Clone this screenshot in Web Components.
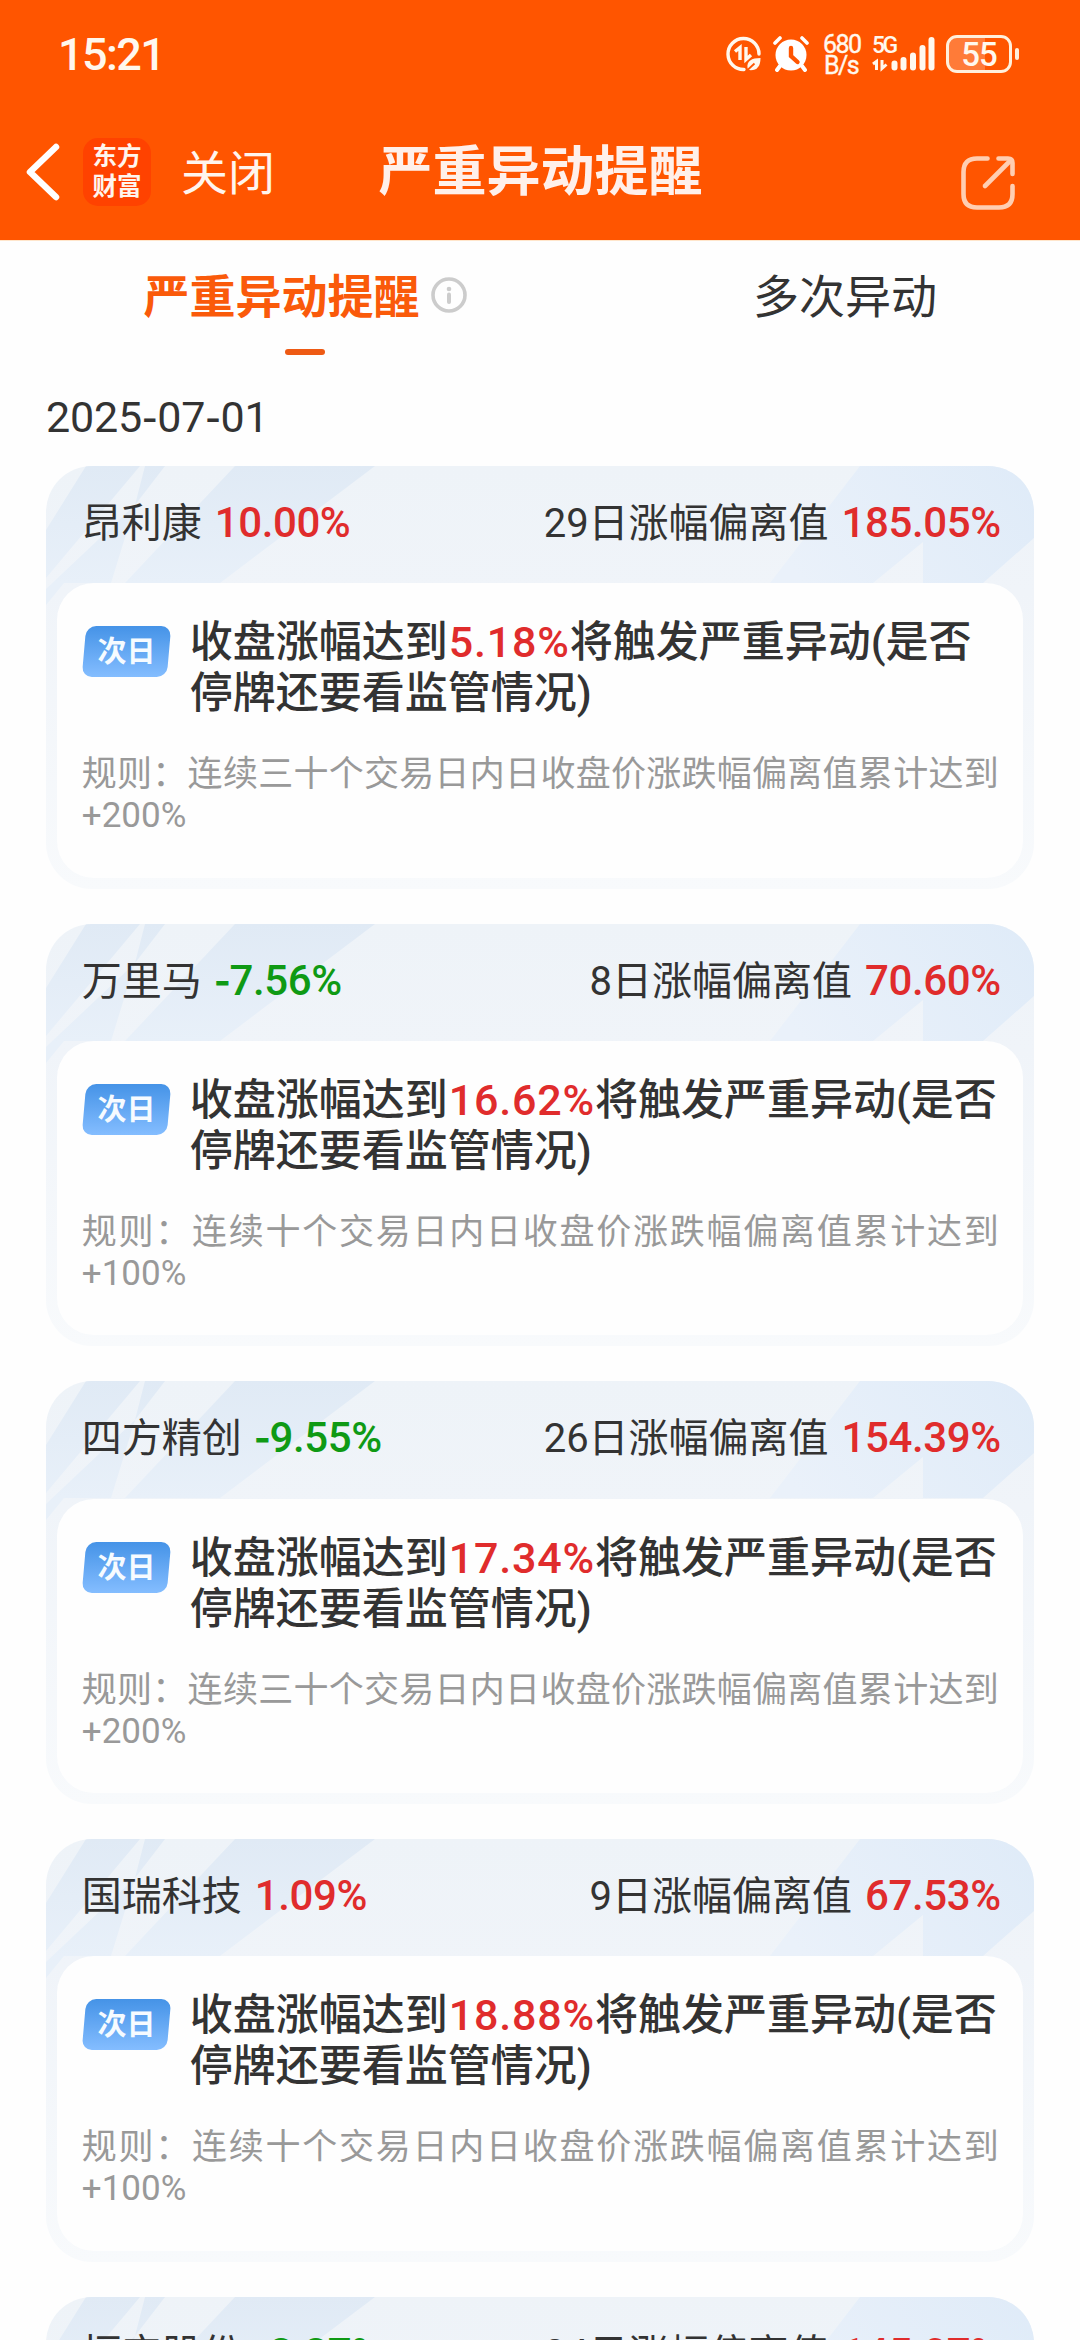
<!DOCTYPE html>
<html lang="zh-CN">
<head>
<meta charset="UTF-8">
<meta name="viewport" content="width=device-width, initial-scale=1.0">
<title>严重异动提醒</title>
<style>
  html, body {
    margin: 0;
    background: #fefefe;
  }
  body {
    height: 2340px;
    overflow: hidden;
    color: #333;
    font-family: Roboto, "Noto Sans CJK SC", sans-serif;
  }
  main {
    padding: 0 46px;
  }
</style>
</head>
<body>
  <status-bar time="15:21"></status-bar>
  <nav-bar>严重异动提醒</nav-bar>
  <tab-bar>
    <tab-item active>严重异动提醒</tab-item>
    <tab-item>多次异动</tab-item>
  </tab-bar>
  <main>
    <date-label value="2025-07-01"></date-label>
    <stock-list></stock-list>
  </main>

<script>
// Roboto's hyphen is too short next to its digits
const wideHyphen = text => text.replace(/-/g, '<span class="hyphen">-</span>');

class StatusBar extends HTMLElement {
  connectedCallback() {
    this.attachShadow({ mode: 'open' });
    this.shadowRoot.innerHTML = `
      <style>
        :host {
          display: flex;
          align-items: center;
          justify-content: space-between;
          box-sizing: border-box;
          height: 108px;
          padding: 0 61px 0 58px;
          background: #ff5500;
          color: #fff8ee;
        }
        .time {
          font-size: 45px;
          font-weight: 500;
          letter-spacing: -1.6px;
        }
        .icons {
          display: flex;
          align-items: center;
        }
        svg { display: block; }
        .speed {
          width: 36px;
          margin: 1px 13px 0 14px;
          font-size: 25px;
          line-height: 21px;
          letter-spacing: -1.6px;
          text-align: center;
          white-space: nowrap;
          -webkit-text-stroke: 0.4px;
        }
        .signal {
          display: grid;
          width: 63px;
          height: 36px;
          margin-right: 11px;
        }
        .signal > * { grid-area: 1 / 1; }
        .signal span {
          font-size: 23px;
          font-weight: 500;
          line-height: 20px;
          letter-spacing: -2.6px;
        }
        .battery {
          display: flex;
          align-items: center;
          gap: 3px;
        }
        .cell {
          box-sizing: border-box;
          width: 66px;
          height: 38px;
          border: 3px solid #fff0dc;
          border-radius: 11px;
          background: linear-gradient(to right, #ff7b38 60%, transparent 60%);
          font-size: 33px;
          font-weight: 500;
          line-height: 33px;
          letter-spacing: -1px;
          text-align: center;
        }
        .nub {
          width: 4px;
          height: 12px;
          border-radius: 2px;
          background: #fff0dc;
        }
      </style>
      <span class="time">${this.getAttribute('time')}</span>
      <div class="icons">
        <svg width="36" height="36" viewBox="0 0 36 36" fill="none" stroke="#fff8ee">
          <path d="M33 18A15.5 15.5 0 1 0 18 33.5" stroke-width="3.4" stroke-linecap="round"/>
          <path d="M9 15.5l5-4V24" stroke-width="3.4"/>
          <path d="M20 11v12.500l5-4.500" stroke-width="3.4"/>
          <path d="M34.500 22c-9 0-14 3-13 10l1 2c8 1 12-3 12-12z" fill="#fff8ee" stroke="none"/>
          <path d="M20 35.500l8.500-8" stroke="#ff5500" stroke-width="1.800"/>
        </svg>
        <svg style="margin-left:11px" width="36" height="36" viewBox="0 0 36 36" fill="none" stroke="#fff" stroke-linecap="round">
          <circle cx="18" cy="19" r="15.5" fill="#fff" stroke="none"/>
          <path d="M2 7l5-5M34 7l-5-5" stroke-width="3.6"/>
          <path d="M7 30l-3 4M29 30l3 4" stroke-width="4"/>
          <path d="M18 12v8l6.500 6" stroke="#ff5500" stroke-width="4.4"/>
        </svg>
        <div class="speed">680<br>B/s</div>
        <div class="signal">
          <span>5G</span>
          <svg width="63" height="36" viewBox="0 0 63 36" fill="#fff8ee">
            <rect x="19.500" y="24.500" width="6" height="10" rx="3"/>
            <rect x="28.500" y="21" width="6" height="13.500" rx="3"/>
            <rect x="38" y="16.500" width="6" height="18" rx="3"/>
            <rect x="47.500" y="9" width="6" height="25.500" rx="3"/>
            <rect x="56.500" y="1" width="6" height="33.500" rx="3"/>
            <path d="M1 28l3.500-2.500V34M10 24v8.500l4.500-4" fill="none" stroke="#fff8ee" stroke-width="3"/>
          </svg>
        </div>
        <div class="battery">
          <div class="cell">55</div>
          <div class="nub"></div>
        </div>
      </div>
    `;
  }
}
customElements.define('status-bar', StatusBar);

class NavBar extends HTMLElement {
  connectedCallback() {
    this.attachShadow({ mode: 'open' });
    this.shadowRoot.innerHTML = `
      <style>
        :host {
          display: grid;
          grid-template-columns: 1fr auto 1fr;
          align-items: center;
          box-sizing: border-box;
          height: 133px;
          padding: 0 63px 4px 26px;
          border-bottom: 1px solid #ffe6cc;
          background: #ff5500;
          color: #fff5ee;
        }
        .left {
          display: flex;
          align-items: center;
        }
        .logo {
          display: grid;
          place-content: center;
          width: 68px;
          height: 68px;
          margin: 0 30px 0 23px;
          border-radius: 15px;
          background: #ff4200;
          font-size: 24.5px;
          font-weight: 700;
          line-height: 30px;
        }
        .close {
          margin-top: 3px;
          font-size: 47px;
          line-height: 60px;
        }
        h1 {
          margin: 1px -38px 0 0;
          font-size: 54px;
          font-weight: 700;
          line-height: 60px;
          color: #fff0ea;
        }
        .share {
          justify-self: end;
          margin-top: 21px;
        }
        svg { display: block; }
      </style>
      <div class="left">
        <svg width="34" height="58" viewBox="0 0 34 58">
          <path d="M30 4L4 29L30 54" fill="none" stroke="#fff" stroke-width="6.500" stroke-linecap="round" stroke-linejoin="round"/>
        </svg>
        <div class="logo"><span>东方</span><span>财富</span></div>
        <span class="close">关闭</span>
      </div>
      <h1><slot></slot></h1>
      <svg class="share" width="58" height="58" viewBox="0 0 58 58" fill="none" stroke="#ffceb2" stroke-width="4.600" stroke-linecap="round" stroke-linejoin="round">
        <path d="M28.500 4.500H18Q4.500 4.500 4.500 18V40Q4.500 53.500 18 53.500H40Q53.500 53.500 53.500 40V32"/>
        <path d="M39.500 4.500H49Q53.500 4.500 53.500 9V20"/>
        <path d="M52 6L26 32"/>
      </svg>
    `;
  }
}
customElements.define('nav-bar', NavBar);

class TabBar extends HTMLElement {
  connectedCallback() {
    this.attachShadow({ mode: 'open' });
    this.shadowRoot.innerHTML = `
      <style>
        :host {
          display: grid;
          grid-template-columns: 610px 470px;
          height: 134px;
        }
      </style>
      <slot></slot>
    `;
  }
}
customElements.define('tab-bar', TabBar);

class TabItem extends HTMLElement {
  connectedCallback() {
    const active = this.hasAttribute('active');
    this.attachShadow({ mode: 'open' });
    this.shadowRoot.innerHTML = `
      <style>
        :host {
          display: flex;
          flex-direction: column;
          align-items: center;
          padding-top: 26px;
          font-size: 46px;
          line-height: 60px;
        }
        :host([active]) {
          color: #fa5a0a;
          font-weight: 700;
        }
        .label {
          display: flex;
          align-items: center;
          gap: 11px;
        }
        svg { margin-top: -4px; }
        .line {
          width: 40px;
          height: 6px;
          margin-top: 22px;
          border-radius: 3px;
          background: #ee5a14;
        }
      </style>
      <div class="label">
        <slot></slot>
        ${active ? `
        <svg width="36" height="36" viewBox="0 0 36 36">
          <circle cx="18" cy="18" r="16" fill="none" stroke="#ccc" stroke-width="3.600"/>
          <circle cx="18" cy="12" r="2.300" fill="#ccc"/>
          <path d="M18 17.500v7.500" stroke="#ccc" stroke-width="4" stroke-linecap="round"/>
        </svg>` : ''}
      </div>
      ${active ? '<div class="line"></div>' : ''}
    `;
  }
}
customElements.define('tab-item', TabItem);

class DateLabel extends HTMLElement {
  connectedCallback() {
    this.attachShadow({ mode: 'open' });
    this.shadowRoot.innerHTML = `
      <style>
        :host {
          display: block;
          height: 91px;
          font-size: 43px;
          line-height: 84px;
          letter-spacing: -0.2px;
        }
        .hyphen {
          font-family: "DejaVu Sans", sans-serif;
          font-weight: 400;
          line-height: 1;
        }
      </style>
      ${wideHyphen(this.getAttribute('value'))}
    `;
  }
}
customElements.define('date-label', DateLabel);

class StockCard extends HTMLElement {
  connectedCallback() {
    const { name, change, days, total, target, rule, limit } = this.data;
    const trend = change.startsWith('-') ? 'down' : 'up';
    this.attachShadow({ mode: 'open' });
    this.shadowRoot.innerHTML = `
      <style>
        :host {
          display: grid;
          height: 422.7px;
          border-radius: 46px;
          overflow: hidden;
          background: linear-gradient(#eef3f8, #f0f4f9 30%, #f8fafc);
        }
        .pattern, .content { grid-area: 1 / 1; }
        .pattern { display: block; }
        .content {
          display: flex;
          flex-direction: column;
          box-sizing: border-box;
          min-width: 0;
          padding: 0 11.3px 11.3px;
        }
        header {
          display: flex;
          justify-content: space-between;
          height: 117.3px;
          padding: 0 22px 0 24.5px;
          font-size: 40px;
          line-height: 114px;
          white-space: pre;
        }
        b {
          font-size: 42px;
          font-weight: 500;
        }
        header b {
          margin-left: 3px;
          letter-spacing: -0.4px;
        }
        .hyphen {
          font-family: "DejaVu Sans", sans-serif;
          font-weight: 400;
          line-height: 1;
          -webkit-text-stroke: 1px;
        }
        .up { color: #e02c2c; }
        .down { color: #0f9a14; }
        .body {
          flex: 1;
          padding: 34px 24px 0 24.5px;
          border-radius: 37px;
          background: #fefefe;
        }
        .notice {
          display: flex;
          gap: 20px;
        }
        .badge {
          flex: none;
          width: 85px;
          height: 51px;
          margin: 9px 2px 0;
          border-radius: 10px;
          background: linear-gradient(#4593e7, #84bdff);
          color: #f6fbff;
          font-size: 29px;
          font-weight: 700;
          line-height: 53px;
          text-align: center;
          transform: skewX(-5deg);
        }
        .badge span {
          display: block;
          transform: skewX(5deg);
        }
        p { margin: 0; }
        .text {
          flex: 1;
          margin: 0 -9px 0 -1px;
          font-size: 43px;
          font-weight: 500;
          line-height: 51px;
        }
        .text b {
          margin-left: 1px;
          font-size: 43px;
          letter-spacing: 0.8px;
        }
        .rule {
          margin-top: 35px;
          color: #999;
          font-size: 35px;
          line-height: 41px;
          text-align: justify;
        }
      </style>
      <svg class="pattern" width="988" height="423" viewBox="0 0 988 423">
        <defs>
          <linearGradient id="l" x1="0" y1="0" x2="0" y2="117" gradientUnits="userSpaceOnUse">
            <stop offset="0" stop-color="#e0eaf5"/>
            <stop offset="1" stop-color="#e8f0f9"/>
          </linearGradient>
          <linearGradient id="r" x1="988" y1="0" x2="780" y2="150" gradientUnits="userSpaceOnUse">
            <stop offset="0" stop-color="#dfebf8"/>
            <stop offset="1" stop-color="#eaf1fa"/>
          </linearGradient>
        </defs>
        <g fill="url(#l)">
          <path d="M40 0H94L0 112V64Z"/>
          <path d="M99 0H119L89 39Z"/>
          <path d="M89 39L65 117H18L0 139V123Z"/>
          <path d="M189 0H329L174 117H79Z"/>
        </g>
        <path d="M814 0H988V72L937 117H877V76L827 117H724Z" fill="url(#r)"/>
      </svg>
      <div class="content">
        <header>
          <span>${name} <b class="${trend}">${wideHyphen(change)}</b></span>
          <span>${days}日涨幅偏离值 <b class="up">${total}</b></span>
        </header>
        <div class="body">
          <div class="notice">
            <div class="badge"><span>次日</span></div>
            <p class="text">收盘涨幅达到<b class="up">${target}</b>将触发严重异动(是否停牌还要看监管情况)</p>
          </div>
          <p class="rule">规则：连续${rule}个交易日内日收盘价涨跌幅偏离值累计达到+${limit}</p>
        </div>
      </div>
    `;
  }
}
customElements.define('stock-card', StockCard);

const stocks = [
  { name: '昂利康', change: '10.00%', days: 29, total: '185.05%', target: '5.18%', rule: '三十', limit: '200%' },
  { name: '万里马', change: '-7.56%', days: 8, total: '70.60%', target: '16.62%', rule: '十', limit: '100%' },
  { name: '四方精创', change: '-9.55%', days: 26, total: '154.39%', target: '17.34%', rule: '三十', limit: '200%' },
  { name: '国瑞科技', change: '1.09%', days: 9, total: '67.53%', target: '18.88%', rule: '十', limit: '100%' },
  { name: '恒宝股份', change: '-3.37%', days: 24, total: '145.07%', target: '20.51%', rule: '三十', limit: '200%' }
];

class StockList extends HTMLElement {
  connectedCallback() {
    this.attachShadow({ mode: 'open' });
    this.shadowRoot.innerHTML = `
      <style>
        :host {
          display: flex;
          flex-direction: column;
          gap: 35px;
        }
      </style>
    `;
    stocks.forEach(stock => {
      const card = document.createElement('stock-card');
      card.data = stock;
      this.shadowRoot.appendChild(card);
    });
  }
}
customElements.define('stock-list', StockList);
</script>
</body>
</html>
